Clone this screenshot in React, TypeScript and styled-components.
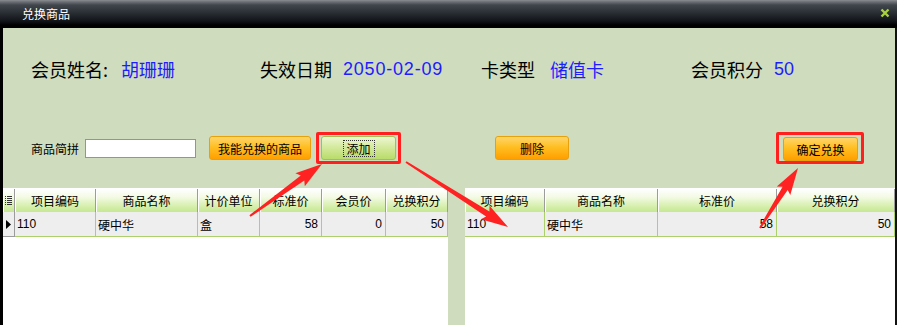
import React from "react"
import styled, { createGlobalStyle } from "styled-components"

const GlobalStyle = createGlobalStyle`
html, body { margin: 0; padding: 0; background: #fff; }
body { font-family: "Noto Sans CJK SC", "DejaVu Sans", sans-serif; }
`

const Window = styled.div`
position: relative;
width: 897px;
height: 325px;
display: flex;
flex-direction: column;
overflow: hidden;
`
const TitleBar = styled.div`
flex: none;
height: 28px;
box-sizing: border-box;
display: flex;
align-items: center;
justify-content: space-between;
padding: 0 7px 2px 22px;
background: linear-gradient(#8a8e93 0px, #6a6e74 2px, #41464d 5px, #2c3137 12px, #111419 21px, #000 25px, #000 28px);
color: #fff;
font-size: 12px;
`
const Body = styled.div`
flex: 1;
display: flex;
flex-direction: column;
background: #cfdcbd;
border-left: 3px solid #000;
border-right: 2px solid #111;
min-height: 0;
`
const InfoRow = styled.div`
height: 30px;
margin-top: 26px;
padding-left: 28px;
display: grid;
grid-template-columns: 229px 221px 210px 1fr;
align-items: center;
font-size: 18px;
`
const InfoItem = styled.div`
display: flex;
align-items: center;
white-space: nowrap;
color: #000;
`
const Value = styled.span<{ $gap: number; $ls?: number }>`
margin-left: ${p => p.$gap}px;
letter-spacing: ${p => p.$ls ?? 0}px;
color: #1d1dff;
font-family: "Liberation Sans", "Noto Sans CJK SC", sans-serif;
`
const ActionRow = styled.div`
height: 34px;
margin-top: 47px;
padding-left: 28px;
display: flex;
align-items: center;
font-size: 12px;
`
const Label = styled.span`
color: #000;
`
const SearchInput = styled.input`
margin-left: 6px;
width: 111px;
height: 19px;
box-sizing: border-box;
border: 1px solid #8aa84a;
background: #fff;
outline: none;
padding: 0 3px;
`
const Button = styled.button<{ $w: number; $green?: boolean; $ml?: number }>`
width: ${p => p.$w}px;
height: 24px;
margin-left: ${p => p.$ml ?? 0}px;
box-sizing: border-box;
border-radius: 3px;
border: 1px solid ${p => (p.$green ? "#9cc35a" : "#e7a10c")};
background: ${p =>
  p.$green
    ? "linear-gradient(#eef7d2 0%, #d4ea9e 45%, #b9dc6a 100%)"
    : "linear-gradient(#ffd56a 0%, #ffbf22 45%, #ff9f00 100%)"};
font-family: "Noto Sans CJK SC", sans-serif;
font-size: 12px;
color: #000;
padding: 0;
display: flex;
align-items: center;
justify-content: center;
`
const FocusText = styled.span`
border: 1px dotted #333;
padding: 0 3px;
line-height: 15px;
`
const Highlight = styled.div<{ $pad: string; $ml: number }>`
margin-left: ${p => p.$ml}px;
padding: ${p => p.$pad};
border: 3px solid #ff1f1f;
border-radius: 2px;
display: flex;
`
const Tables = styled.div`
flex: 1;
margin-top: 23px;
display: flex;
gap: 17px;
min-height: 0;
`
const Panel = styled.div<{ $w: number }>`
width: ${p => p.$w}px;
background: #fff;
padding-top: 1px;
font-size: 12px;
`
const GridRow = styled.div<{ $cols: string }>`
display: grid;
grid-template-columns: ${p => p.$cols};
`
const HeadCell = styled.div`
height: 23px;
box-sizing: border-box;
display: flex;
align-items: center;
justify-content: center;
border-right: 1px solid #9c9c9c;
box-shadow: inset 1px 0 #fff;
background: linear-gradient(#ffffff 0%, #f3fae4 35%, #d6efad 75%, #c6e793 100%);
color: #000;
`
const DataCell = styled.div<{ $align?: string }>`
height: 25px;
box-sizing: border-box;
display: flex;
align-items: center;
justify-content: ${p => (p.$align === "right" ? "flex-end" : "flex-start")};
padding: 0 3px 0 2px;
background: #eeeeee;
border-right: 1px solid #acd06c;
border-bottom: 1px solid #acd06c;
font-family: "Liberation Sans", "Noto Sans CJK SC", sans-serif;
color: #000;
white-space: nowrap;
`
const MarkerCell = styled(DataCell)`
justify-content: center;
padding: 0;
border-right: 1px solid #9c9c9c;
border-bottom: 1px solid #9c9c9c;
`
const Overlay = styled.svg`
position: absolute;
left: 0;
top: 0;
pointer-events: none;
`

type Cell = { text: string; align?: string }

const leftCols = "12px 81px 102px 62px 62px 64px 62px"
const leftHead = ["项目编码", "商品名称", "计价单位", "标准价", "会员价", "兑换积分"]
const leftRow: Cell[] = [
  { text: "110" },
  { text: "硬中华" },
  { text: "盒" },
  { text: "58", align: "right" },
  { text: "0", align: "right" },
  { text: "50", align: "right" },
]

const rightCols = "80px 113px 119px 118px"
const rightHead = ["项目编码", "商品名称", "标准价", "兑换积分"]
const rightRow: Cell[] = [
  { text: "110" },
  { text: "硬中华" },
  { text: "58", align: "right" },
  { text: "50", align: "right" },
]

const arrowPoints = (x1: number, y1: number, x2: number, y2: number) => {
  const dx = x2 - x1
  const dy = y2 - y1
  const len = Math.hypot(dx, dy)
  const ux = dx / len
  const uy = dy / len
  const px = -uy
  const py = ux
  const head = 24
  const hw = 8
  const sw = 3
  const tw = 1
  const bx = x2 - ux * head
  const by = y2 - uy * head
  const pts = [
    [x1 + px * tw, y1 + py * tw],
    [bx + px * sw, by + py * sw],
    [bx + px * hw - ux * 3, by + py * hw - uy * 3],
    [x2, y2],
    [bx - px * hw - ux * 3, by - py * hw - uy * 3],
    [bx - px * sw, by - py * sw],
    [x1 - px * tw, y1 - py * tw],
  ]
  return pts.map(p => `${p[0].toFixed(1)},${p[1].toFixed(1)}`).join(" ")
}

const arrows = [
  [250, 216, 322, 164],
  [406, 162, 508, 227],
  [760, 228, 798, 168],
]

const App: React.FC = () => {
  return (
    <Window>
      <GlobalStyle />
      <TitleBar>
        <span>兑换商品</span>
        <svg width="10" height="10" viewBox="0 0 10 10">
          <path d="M1.5 1.5 L8.5 8.5 M8.5 1.5 L1.5 8.5" stroke="#a9d23c" strokeWidth="2.4" />
        </svg>
      </TitleBar>
      <Body>
        <InfoRow>
          <InfoItem>
            会员姓名:<Value $gap={13}>胡珊珊</Value>
          </InfoItem>
          <InfoItem>
            失效日期<Value $gap={11} $ls={0.8}>2050-02-09</Value>
          </InfoItem>
          <InfoItem>
            卡类型<Value $gap={15}>储值卡</Value>
          </InfoItem>
          <InfoItem>
            会员积分<Value $gap={11}>50</Value>
          </InfoItem>
        </InfoRow>
        <ActionRow>
          <Label>商品简拼</Label>
          <SearchInput />
          <Button $w={102} $ml={13}>我能兑换的商品</Button>
          <Highlight $ml={5} $pad="1px 2px">
            <Button $w={75} $green>
              <FocusText>添加</FocusText>
            </Button>
          </Highlight>
          <Button $w={74} $ml={94}>删除</Button>
          <Highlight $ml={207} $pad="2px 3px 0 4px">
            <Button $w={75}>确定兑换</Button>
          </Highlight>
        </ActionRow>
        <Tables>
          <Panel $w={445}>
            <GridRow $cols={leftCols}>
              <HeadCell>
                <svg width="7" height="9" viewBox="0 0 7 9">
                  <path d="M0 0.5h1M0 2.5h1M0 4.5h1M0 6.5h1M0 8.5h1M2 0.5h5M2 2.5h5M2 4.5h5M2 6.5h5M2 8.5h5" stroke="#333" strokeWidth="1" />
                </svg>
              </HeadCell>
              {leftHead.map(h => (
                <HeadCell key={h}>{h}</HeadCell>
              ))}
            </GridRow>
            <GridRow $cols={leftCols}>
              <MarkerCell>
                <svg width="5" height="9" viewBox="0 0 5 9">
                  <path d="M0 0 L5 4.5 L0 9 Z" fill="#000" />
                </svg>
              </MarkerCell>
              {leftRow.map((c, i) => (
                <DataCell key={i} $align={c.align}>{c.text}</DataCell>
              ))}
            </GridRow>
          </Panel>
          <Panel $w={430}>
            <GridRow $cols={rightCols}>
              {rightHead.map(h => (
                <HeadCell key={h}>{h}</HeadCell>
              ))}
            </GridRow>
            <GridRow $cols={rightCols}>
              {rightRow.map((c, i) => (
                <DataCell key={i} $align={c.align}>{c.text}</DataCell>
              ))}
            </GridRow>
          </Panel>
        </Tables>
      </Body>
      <Overlay width="897" height="325" viewBox="0 0 897 325">
        {arrows.map((a, i) => (
          <polygon key={i} points={arrowPoints(a[0], a[1], a[2], a[3])} fill="#ff2222" />
        ))}
      </Overlay>
    </Window>
  )
}

export default App
